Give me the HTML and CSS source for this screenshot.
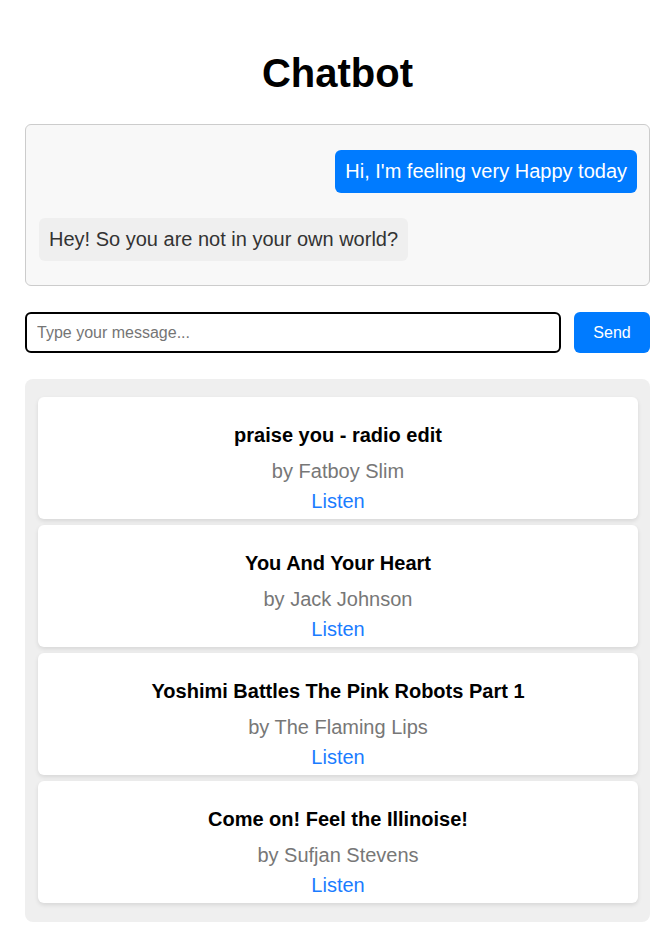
FILE: index.html
```html
<!DOCTYPE html>
<html lang="en">
<head>
<meta charset="utf-8">
<title>Chatbot</title>
<link rel="stylesheet" href="styles.css">
</head>
<body>
<div class="app">
  <h1 class="title">Chatbot</h1>
  <div class="chat-box">
    <div class="msg msg-user">Hi, I'm feeling very Happy today</div>
    <div class="msg msg-bot">Hey! So you are not in your own world?</div>
  </div>
  <div class="input-row">
    <input class="msg-input" type="text" placeholder="Type your message...">
    <button class="send-btn">Send</button>
  </div>
  <div class="songs">
    <div class="song-card">
      <h3 class="song-title">praise you - radio edit</h3>
      <p class="song-artist">by Fatboy Slim</p>
      <a class="song-link" href="#">Listen</a>
    </div>
    <div class="song-card">
      <h3 class="song-title">You And Your Heart</h3>
      <p class="song-artist">by Jack Johnson</p>
      <a class="song-link" href="#">Listen</a>
    </div>
    <div class="song-card">
      <h3 class="song-title">Yoshimi Battles The Pink Robots Part 1</h3>
      <p class="song-artist">by The Flaming Lips</p>
      <a class="song-link" href="#">Listen</a>
    </div>
    <div class="song-card">
      <h3 class="song-title">Come on! Feel the Illinoise!</h3>
      <p class="song-artist">by Sufjan Stevens</p>
      <a class="song-link" href="#">Listen</a>
    </div>
  </div>
</div>
</body>
</html>
```

FILE: styles.css
```css
* { box-sizing: border-box; }

body {
  margin: 0;
  background: #fff;
  font-family: "Liberation Sans", Arial, sans-serif;
  color: #000;
}

.app {
  padding: 0 22px 7px 25px;
}

.title {
  margin: 50px 0 28px;
  font-size: 40px;
  font-weight: bold;
  text-align: center;
  line-height: 46px;
}

.chat-box {
  display: flex;
  flex-direction: column;
  gap: 25px;
  padding: 25px 12px 24px 13px;
  background: #f8f8f8;
  border: 1px solid #ccc;
  border-radius: 6px;
}

.msg {
  font-size: 20px;
  line-height: 23px;
  padding: 10px 10px;
  border-radius: 6px;
  max-width: 80%;
}

.msg-user {
  align-self: flex-end;
  background: #007bff;
  color: #fff;
}

.msg-bot {
  align-self: flex-start;
  background: #efefef;
  color: #333;
}

.input-row {
  display: flex;
  gap: 13px;
  margin-top: 26px;
}

.msg-input {
  flex: 1;
  height: 41px;
  padding: 0 10px;
  border: 2px solid #000;
  border-radius: 6px;
  font-family: inherit;
  font-size: 16px;
  outline: none;
}

.msg-input::placeholder {
  color: #757575;
}

.send-btn {
  width: 76px;
  height: 41px;
  border: none;
  border-radius: 6px;
  background: #007bff;
  color: #fff;
  font-family: inherit;
  font-size: 16px;
  padding: 0;
}

.songs {
  margin-top: 26px;
  display: flex;
  flex-direction: column;
  gap: 6px;
  padding: 18px 12px 19px 13px;
  background: #efefef;
  border-radius: 8px;
}

.song-card {
  background: #fff;
  border-radius: 6px;
  box-shadow: 0 2px 4px rgba(0, 0, 0, 0.1);
  padding: 27px 10px 6px;
  text-align: center;
  height: 122px;
}

.song-title {
  margin: 0 0 13px;
  font-size: 20px;
  line-height: 23px;
  font-weight: bold;
  color: #000;
}

.song-artist {
  margin: 0 0 7px;
  font-size: 20px;
  line-height: 23px;
  color: #777;
}

.song-link {
  display: block;
  font-size: 20px;
  line-height: 23px;
  color: #1a7cff;
  text-decoration: none;
}
```
